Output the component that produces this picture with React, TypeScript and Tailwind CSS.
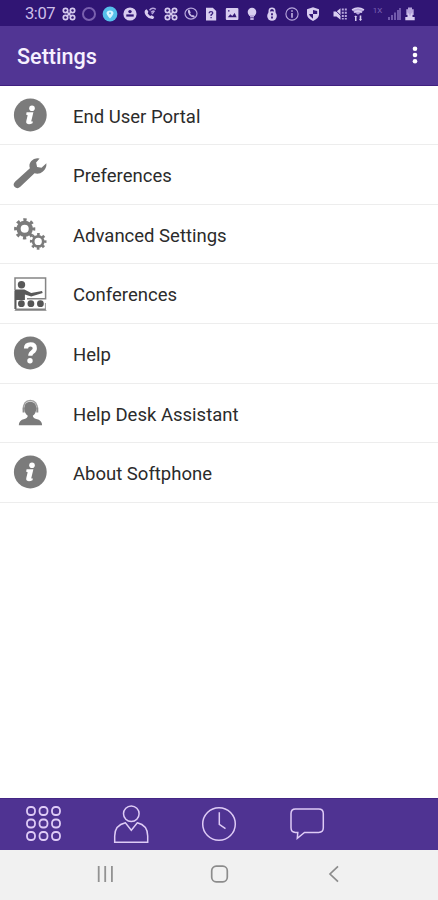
import type { ReactNode } from 'react'

const InfoIcon = () => (
    <svg viewBox="0 0 36 36" className="w-9 h-9">
        <circle cx="18.3" cy="18" r="16.4" fill="#7b7b7b" />
        <circle cx="20" cy="11.2" r="2.8" fill="#fff" />
        <path d="M14.6 15.3h6.8l-2.1 8.6q0 .8 1.6.5l-.4 1.9q-2.2 1-4.4.8-2.4-.3-1.8-3l1.3-5.5q.1-1-1.5-.9z" fill="#fff" />
    </svg>
)

const WrenchIcon = () => (
    <svg viewBox="0 0 36 36" className="w-9 h-9">
        <path
            d="M27.6 2.6Q22.5 1.4 19.3 5.1q-2.9 3.4-1.4 7.2L3 25.8q-2.6 2.9-.3 5.3 2.7 2.4 5.6-.3L22.5 17.2q4.8 1.4 8.4-1.8 3.9-3.4 3.5-8.2l-4.9 4.5-4.4-.8-1-4.3z"
            fill="#797979"
        />
    </svg>
)

const GearsIcon = () => (
    <svg viewBox="0 0 36 36" className="w-9 h-9" fill="none" stroke="#7b7b7b">
        <circle cx="12.7" cy="12.8" r="6.1" strokeWidth="4.1" />
        <circle cx="12.7" cy="12.8" r="8.8" strokeWidth="3.6" strokeDasharray="3.2 3.711" strokeDashoffset="1.6" />
        <circle cx="26.2" cy="25.4" r="5" strokeWidth="2.7" />
        <circle cx="26.2" cy="25.4" r="6.9" strokeWidth="2.8" strokeDasharray="2.6 2.819" strokeDashoffset="1.3" />
    </svg>
)

const ConferenceIcon = () => (
    <svg viewBox="0 0 36 36" className="w-9 h-9">
        <path d="M3 14V2h30.6v20.8H15" fill="none" stroke="#858585" strokeWidth="1.5" />
        <circle cx="9.5" cy="8.8" r="3.7" fill="#595959" />
        <path d="M2.4 33V15q0-1.6 1.8-1.6h8.2l6.8 3.7 10.8-2.1.7 1.9-11.5 3.5-6.3-1.8v5.5H4.5V33z" fill="#595959" />
        <path d="M33.4 27v6" stroke="#999" strokeWidth="1" />
        <g fill="#555">
            <circle cx="9.4" cy="27.7" r="3.4" />
            <circle cx="18.9" cy="27.7" r="3.4" />
            <circle cx="28.4" cy="27.7" r="3.4" />
        </g>
        <path d="M2.4 34.8l1.4-2.2h29.4l1.5 2.2z" fill="#808080" />
    </svg>
)

const HelpIcon = () => (
    <svg viewBox="0 0 36 36" className="w-9 h-9">
        <circle cx="18.3" cy="18" r="16.4" fill="#7b7b7b" />
        <path d="M14 13.6q0-4.2 4.5-4.2 4.3 0 4.3 3.8 0 2.3-2.3 3.7-2.2 1.5-2.2 3.9" fill="none" stroke="#fff" strokeWidth="4.2" />
        <circle cx="18" cy="25.8" r="2.7" fill="#fff" />
    </svg>
)

const AssistantIcon = () => (
    <svg viewBox="0 0 36 36" className="w-9 h-9">
        <path d="M11.6 14.6Q11 5.6 18.3 5.6t6.9 9" fill="none" stroke="#a0a0a0" strokeWidth="1.5" />
        <path d="M10.6 12.4h2v5h-2zm13.7 0h2v5h-2z" fill="#8c8c8c" />
        <path
            d="M18.3 6.8q6.2 0 6 6.5-.2 5.3-3.5 7.4.2 2.4 3.5 3.2 5.8 1.2 5.8 6.3H6.8q0-5.1 5.6-6.3 3.2-.8 3.4-3.2-3.3-2.1-3.5-7.4-.1-6.5 6-6.5z"
            fill="#7b7b7b"
        />
    </svg>
)

const items: { label: string; icon: ReactNode }[] = [
    { label: 'End User Portal', icon: <InfoIcon /> },
    { label: 'Preferences', icon: <WrenchIcon /> },
    { label: 'Advanced Settings', icon: <GearsIcon /> },
    { label: 'Conferences', icon: <ConferenceIcon /> },
    { label: 'Help', icon: <HelpIcon /> },
    { label: 'Help Desk Assistant', icon: <AssistantIcon /> },
    { label: 'About Softphone', icon: <InfoIcon /> },
]

const Pinwheel = () => (
    <g fill="none" stroke="#d5c9ee" strokeWidth="1.7">
        <circle cx="4.5" cy="4.5" r="2.2" />
        <circle cx="11.5" cy="4.5" r="2.2" />
        <circle cx="4.5" cy="11.5" r="2.2" />
        <circle cx="11.5" cy="11.5" r="2.2" />
        <path d="M5.5 5.5l5 5m0-5l-5 5" />
    </g>
)

// Notification icons, left to right, each in a 16x16 box
const notifications: ReactNode[] = [
    <Pinwheel />,
    <circle cx="8" cy="8" r="6" fill="none" stroke="#7960ae" strokeWidth="2" />,
    <>
        <circle cx="8" cy="8" r="7.4" fill="#55c0ea" />
        <path d="M8 12.5Q4.2 8.5 4.5 6.7 5 4.5 8 4.5t3.5 2.2Q11.8 8.5 8 12.5z" fill="#d5f4ff" />
        <circle cx="8" cy="7.3" r="1" fill="#55c0ea" />
    </>,
    <>
        <circle cx="8" cy="8" r="6.6" fill="#d9cdef" />
        <circle cx="8" cy="5.6" r="1.7" fill="#301574" />
        <path d="M4.3 8.4h7.4v2.2H4.3z" fill="#301574" />
    </>,
    <>
        <path d="M3.3 4.1Q1.5 6.5 4.3 10t6.8 3l1.2-2-2.6-1.7-1.6.8L5.7 7.4l.7-1.6-1.6-2.6z" fill="#d9cdef" />
        <path d="M7.5 4.3Q10.2.9 13.8 3.4M9 6.4q1.8-2.2 3.8-.9M9.8 8l2-2" fill="none" stroke="#b7a5dc" strokeWidth="1.4" />
    </>,
    <Pinwheel />,
    <>
        <ellipse cx="8" cy="7.6" rx="6" ry="5.5" fill="none" stroke="#b7a7dc" strokeWidth="1.2" />
        <path d="M5.2 3.7Q4 6.3 6.2 9t5 2.4l.6-1.5-1.9-1-1 .7-1.8-2.2.6-1-1.4-2.8z" fill="#cbbde8" />
    </>,
    <>
        <path d="M3 1.8h6.8L13.2 5v9.4H3z" fill="#d8cdf0" />
        <path d="M6.2 7.2q0-1.5 1.8-1.5t1.8 1.4q0 1-1.7 1.8v1.2m0 .8v1.4" fill="none" stroke="#3c2480" strokeWidth="1.3" />
    </>,
    <>
        <rect x="1.8" y="2" width="12.6" height="12" rx="1" fill="#d8cdf0" />
        <path d="M3.8 11.3l2.5-3 2 1.8 2.4-3 1.9 4.2zM4 4.2h1.5v1.4H4z" fill="#341878" />
    </>,
    <>
        <circle cx="8" cy="6.1" r="4.3" fill="#d8cdf0" />
        <path d="M6 9h4v2.4H6zM6.3 12h3.4v2H6.3z" fill="#bbaade" />
    </>,
    <>
        <path d="M5.3 6.8V4.7Q5.5 2.2 8 2.2t2.7 2.5v2.1" fill="none" stroke="#d8cdf0" strokeWidth="1.6" />
        <circle cx="8" cy="10" r="4.8" fill="#d8cdf0" />
        <path d="M8 7.3v2m0 1.2v2" stroke="#341878" strokeWidth="1.8" />
    </>,
    <>
        <circle cx="8" cy="8" r="6.1" fill="none" stroke="#b8a8dd" strokeWidth="1.1" />
        <path d="M8 4.3v1.5m0 1.2v4.8" stroke="#cbbde8" strokeWidth="1.5" />
    </>,
    <>
        <path d="M8 1.3l6 2v5q0 4-6 6.8-6-2.8-6-6.8v-5z" fill="#d8cdf0" />
        <path d="M8 4v4h4.2V4.9zM8 8v4.7Q4.4 10.5 4 8z" fill="#341878" />
    </>,
]

const StatusBar = () => (
    <div className="h-[26px] shrink-0 bg-[#301574] flex items-center pl-[25px] pt-[2px]">
        <span className="w-[34px] text-[16.5px] leading-none tracking-[-0.4px] text-[#cdbfe9]">3:07</span>
        <div className="flex w-[264px]">
            {notifications.map((icon, i) => (
                <span key={i} className="w-[20.3px] flex justify-center">
                    <svg viewBox="0 0 16 16" className="w-4 h-4">{icon}</svg>
                </span>
            ))}
        </div>
        {/* Muted, wifi, network and battery */}
        <svg viewBox="0 0 16 16" className="w-4 h-4 ml-[9px]">
            <path d="M1.5 5.5h3l4-3.3v11.6l-4-3.3h-3z" fill="#d8cdf0" />
            <path d="M1.3 2.2l11.8 11.6" stroke="#301574" strokeWidth="1" />
            <path d="M10.8 2.5v11M13.8 2.5v11" stroke="#b8a8dd" strokeWidth="2" strokeDasharray="2 1.2" />
        </svg>
        <svg viewBox="0 0 16 16" className="w-4 h-4 ml-[2px]">
            <path d="M2 4.2Q8 .2 14 4.2L8 8.8z" fill="#b5a3db" />
            <path d="M2 3.8Q8 0 14 3.8M4 6.5q4-2.8 8 0" fill="none" stroke="#d8cdf0" strokeWidth="1.5" />
            <path d="M4 11l1.7-1.6L7.4 11H6.5v4H5v-4zm8.2 2.2L10.5 15l-1.7-1.8h.9V9.5h1.6v3.7z" fill="#d8cdf0" />
        </svg>
        <span className="w-[17px] ml-[3px] pb-[7px] text-[8px] leading-none text-[#7c64b5] text-center">1X</span>
        <svg viewBox="0 0 16 16" className="w-4 h-4">
            <path d="M3 14v-3m3 3V9m3 5V6.5m3 7.5v-10m2 10V2" stroke="#7961b2" strokeWidth="1.8" />
        </svg>
        <svg viewBox="0 0 16 16" className="w-4 h-4">
            <path d="M6 1.5h4v1.7h1.7V9H4.3V3.2H6z" fill="#b5a3db" />
            <path d="M5.5 6l2.5 3.5L10.5 6v5h2.2v3.2H3.3V11h2.2z" fill="#d8cdf0" />
        </svg>
    </div>
)

const Header = () => (
    <header className="h-[59.6px] shrink-0 bg-[#513594] border-b border-[#402080] flex items-center justify-between pl-[17px] pr-[19px]">
        <h1 className="text-[21.6px] leading-none font-medium text-[#f6f0ff] pt-[2px]">Settings</h1>
        <svg viewBox="0 0 8 20" className="w-2 h-5" fill="#fff">
            <circle cx="4" cy="3.8" r="2.3" />
            <circle cx="4" cy="10" r="2.3" />
            <circle cx="4" cy="16.2" r="2.3" />
        </svg>
    </header>
)

const dots = [5, 17.5, 30]

const TabBar = () => (
    <nav className="h-[52px] shrink-0 bg-[#4f3392] border-t border-[#442685] flex items-center pb-[2px]">
        <div className="w-[87.6px] flex justify-center">
            <svg viewBox="0 0 36 36" className="w-9 h-9" fill="none" stroke="#decbf6" strokeWidth="1.8">
                {dots.map((y) => dots.map((x) => <rect key={`${x}-${y}`} x={x - 4} y={y - 4} width="8" height="8" rx="3.4" />))}
            </svg>
        </div>
        <div className="w-[87.6px] flex justify-center">
            <svg viewBox="0 0 38 40" className="w-[38px] h-10" fill="none" stroke="#decbf6" strokeWidth="1.5">
                <circle cx="19.3" cy="9.7" r="7.8" />
                <path d="M13.4 18.8Q2.7 21.2 2.7 32v6.2h33V32q0-10.8-10.4-13.2l-6 7.4z" />
            </svg>
        </div>
        <div className="w-[87.6px] flex justify-center">
            <svg viewBox="0 0 36 36" className="w-9 h-9" fill="none" stroke="#decbf6" strokeWidth="1.5">
                <circle cx="18" cy="18" r="16.3" />
                <path d="M18.3 6.2v12.2l6.2 4.2" />
            </svg>
        </div>
        <div className="w-[87.6px] flex justify-center">
            <svg viewBox="0 0 36 36" className="w-9 h-9" fill="none" stroke="#decbf6" strokeWidth="1.5">
                <path d="M6.5 3h23.2q4.6 0 4.6 4.6v14.2q0 4.6-4.6 4.6H15.5l-7.2 5.9.5-5.9H6.5q-4.5 0-4.5-4.6V7.6Q2 3 6.5 3z" />
            </svg>
        </div>
    </nav>
)

const SystemNav = () => (
    <div className="h-[50px] shrink-0 bg-[#f1f1f1] flex items-center justify-between pl-[95px] pr-[94px] pb-[3px]">
        <svg viewBox="0 0 20 20" className="w-5 h-5" stroke="#929292" strokeWidth="1.8">
            <path d="M3.7 2v16M10.2 2v16M16.9 2v16" />
        </svg>
        <svg viewBox="0 0 20 20" className="w-5 h-5" fill="none" stroke="#8c8c8c" strokeWidth="1.7">
            <rect x="1.7" y="2.2" width="15.6" height="15.6" rx="4.5" />
        </svg>
        <svg viewBox="0 0 20 20" className="w-5 h-5" fill="none" stroke="#8c8c8c" strokeWidth="1.7">
            <path d="M14 2.3L6 10l8 7.7" />
        </svg>
    </div>
)

const App = () => {
    return (
        <div className="w-full h-screen bg-white flex flex-col overflow-hidden font-['Roboto',sans-serif]">
            <StatusBar />
            <Header />

            <ul className="flex-1">
                {items.map((item) => (
                    <li key={item.label} className="h-[59.6px] border-b border-[#ededed] flex items-center pl-3">
                        {item.icon}
                        <span className="ml-[25px] pt-[4px] text-[18.5px] leading-none text-[#2b2b2b]">{item.label}</span>
                    </li>
                ))}
            </ul>

            <TabBar />
            <SystemNav />
        </div>
    )
}

export default App
